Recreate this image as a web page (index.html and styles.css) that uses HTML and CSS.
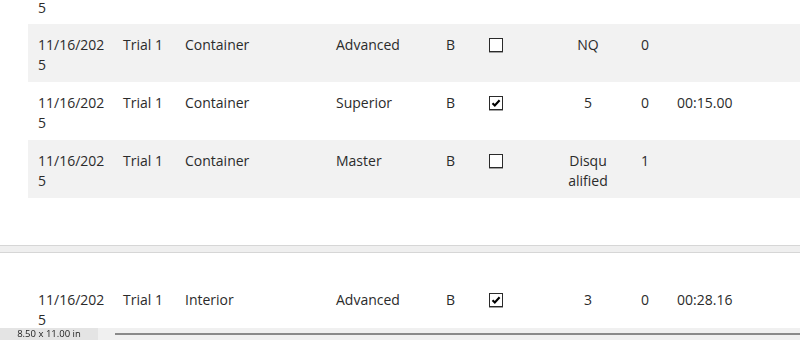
FILE: index.html
```html
<!DOCTYPE html>
<html>
<head>
<meta charset="utf-8">
<link rel="stylesheet" href="styles.css">
</head>
<body>
<div class="report">
  <div class="tail">5</div>

  <div class="row shade">
    <div class="c date">11/16/2025</div>
    <div class="c">Trial 1</div>
    <div class="c">Container</div>
    <div class="c">Advanced</div>
    <div class="c">B</div>
    <div class="c chk"><span class="box"></span></div>
    <div class="c res">NQ</div>
    <div class="c">0</div>
    <div class="c"></div>
  </div>

  <div class="row">
    <div class="c date">11/16/2025</div>
    <div class="c">Trial 1</div>
    <div class="c">Container</div>
    <div class="c">Superior</div>
    <div class="c">B</div>
    <div class="c chk"><span class="box"><svg viewBox="0 0 12 12" width="12" height="12"><path d="M2.5 6.2 L4.8 8.5 L9.6 3.2" fill="none" stroke="#000" stroke-width="2.1"/></svg></span></div>
    <div class="c res">5</div>
    <div class="c">0</div>
    <div class="c">00:15.00</div>
  </div>

  <div class="row shade">
    <div class="c date">11/16/2025</div>
    <div class="c">Trial 1</div>
    <div class="c">Container</div>
    <div class="c">Master</div>
    <div class="c">B</div>
    <div class="c chk"><span class="box"></span></div>
    <div class="c res">Disqualified</div>
    <div class="c">1</div>
    <div class="c"></div>
  </div>

  <div class="pagebreak"></div>

  <div class="row">
    <div class="c date">11/16/2025</div>
    <div class="c">Trial 1</div>
    <div class="c">Interior</div>
    <div class="c">Advanced</div>
    <div class="c">B</div>
    <div class="c chk"><span class="box"><svg viewBox="0 0 12 12" width="12" height="12"><path d="M2.5 6.2 L4.8 8.5 L9.6 3.2" fill="none" stroke="#000" stroke-width="2.1"/></svg></span></div>
    <div class="c res">3</div>
    <div class="c">0</div>
    <div class="c">00:28.16</div>
  </div>
</div>

<div class="statusbar">
  <div class="pagesize">8.50 x 11.00 in</div>
  <div class="ruler"><div class="rule-line"></div></div>
</div>
</body>
</html>
```

FILE: styles.css
```css
html, body {
  margin: 0;
  padding: 0;
  background: #ffffff;
}

body {
  font-family: "Open Sans", "Noto Sans", "Liberation Sans", sans-serif;
  font-size: 14px;
  line-height: 20px;
  color: #2b2b2b;
  overflow: hidden;
  height: 340px;
}

.tail {
  padding-left: 38px;
  line-height: 16px;
  height: 24px;
}

.row {
  margin-left: 28px;
  display: grid;
  grid-template-columns: 85px 62px 151px 110px 43px 66px 86px 36px 1fr;
  padding: 11px 0 7px 0;
  height: 40px;
}

.shade {
  background: #f2f2f2;
}

.c {
  padding-left: 10px;
  word-break: break-all;
}

.date {
  width: 70px;
}

.chk {
  display: flex;
  align-items: flex-start;
  padding-top: 3px;
}

.box {
  display: block;
  width: 12px;
  height: 12px;
  border: 1px solid #2a2a2a;
  background: #ffffff;
  box-shadow: 0 1px 0 #a0a0a0;
}

.box svg {
  display: block;
}

.res {
  padding: 0 22px;
  text-align: center;
}

.pagebreak {
  margin-top: 47px;
  height: 6px;
  border-top: 1px solid #d6d6d6;
  border-bottom: 1px solid #d6d6d6;
  background: #efefef;
  margin-bottom: 26px;
}

.statusbar {
  position: fixed;
  left: 0;
  right: 0;
  bottom: 0;
  height: 12px;
  display: flex;
  background: #f0f0f0;
}

.pagesize {
  width: 98px;
  background: #e4e4e4;
  font-family: "Open Sans", "Noto Sans", sans-serif;
  font-size: 9.5px;
  line-height: 12px;
  color: #222222;
  text-align: center;
}

.ruler {
  flex: 1;
  display: flex;
  align-items: center;
  padding-left: 17px;
}

.rule-line {
  flex: 1;
  height: 2px;
  background: #8a8a8a;
}
```
